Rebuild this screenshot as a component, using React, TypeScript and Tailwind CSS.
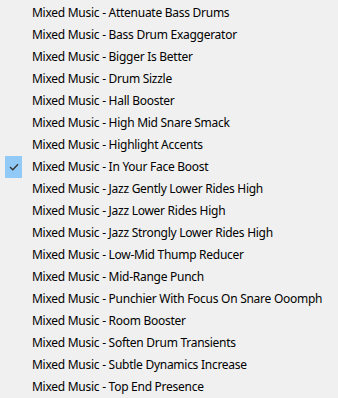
import React from 'react'

const presets = [
  'Attenuate Bass Drums',
  'Bass Drum Exaggerator',
  'Bigger Is Better',
  'Drum Sizzle',
  'Hall Booster',
  'High Mid Snare Smack',
  'Highlight Accents',
  'In Your Face Boost',
  'Jazz Gently Lower Rides High',
  'Jazz Lower Rides High',
  'Jazz Strongly Lower Rides High',
  'Low-Mid Thump Reducer',
  'Mid-Range Punch',
  'Punchier With Focus On Snare Ooomph',
  'Room Booster',
  'Soften Drum Transients',
  'Subtle Dynamics Increase',
  'Top End Presence',
]

const selected = 'In Your Face Boost'

export default function App() {
  return (
    <div className="w-[338px] h-[398px] overflow-hidden bg-[#f0f0f0] pt-[2px] text-[12px] tracking-[-0.27px] text-black" style={{ fontFamily: '"Noto Sans", sans-serif' }}>
      {presets.map((p) => (
        <div key={p} className="flex h-[22px] items-center">
          <div className="w-[32px] h-full flex items-center">
            {p === selected && (
              <div className="ml-[5px] w-[17px] h-full bg-[#91c9f7] flex items-center justify-center">
                <svg width="10" height="8" viewBox="0 0 10 8" fill="none">
                  <path d="M1 4 L3.8 6.8 L9 1.2" stroke="#333" strokeWidth="1.3" />
                </svg>
              </div>
            )}
          </div>
          <span className="whitespace-nowrap">Mixed Music - {p}</span>
        </div>
      ))}
    </div>
  )
}
